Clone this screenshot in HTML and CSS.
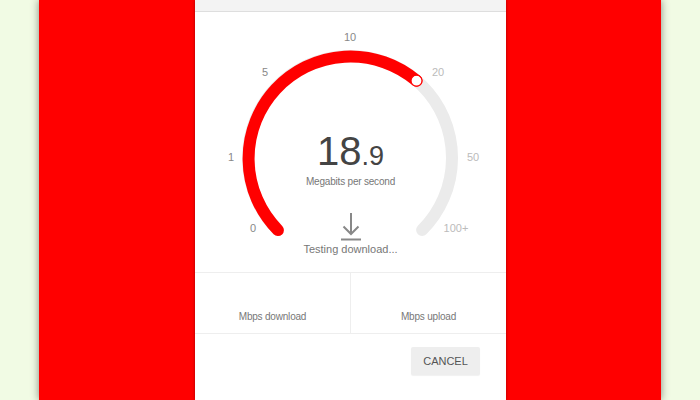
FILE: index.html
```html
<!DOCTYPE html>
<html lang="en">
<head>
    <meta charset="UTF-8">
    <meta name="viewport" content="width=device-width, initial-scale=1.0">
    <title>Speed Test</title>
    <link rel="stylesheet" href="styles.css">
</head>
<body>
    <div class="stage">
        <div class="dialog">
            <div class="dialog-head"></div>

            <div class="gauge">
                <svg class="dial" width="311" height="260" viewBox="0 0 311 260">
                    <path d="M 82.9 218.1 A 102 102 0 1 1 227.1 218.1" fill="none" stroke="#ebebeb" stroke-width="12" stroke-linecap="round"/>
                    <path d="M 82.9 218.1 A 102 102 0 0 1 221.5 68.7" fill="none" stroke="#ff0000" stroke-width="12" stroke-linecap="round"/>
                    <circle cx="221.5" cy="68.7" r="5.5" fill="#fff" stroke="#ff0000" stroke-width="1.2"/>
                    <g class="ticks">
                        <text x="58" y="216" class="passed">0</text>
                        <text x="36" y="145" class="passed">1</text>
                        <text x="70" y="60" class="passed">5</text>
                        <text x="155" y="25" class="passed">10</text>
                        <text x="243" y="60">20</text>
                        <text x="278" y="145">50</text>
                        <text x="261" y="216">100+</text>
                    </g>
                </svg>

                <div class="readout">
                    <div class="value">18<span class="decimal">.9</span></div>
                    <div class="unit">Megabits per second</div>
                </div>

                <div class="status">
                    <svg width="20" height="30" viewBox="0 0 20 30">
                        <path d="M10 2 V23 M2.5 15.5 L10 23 L17.5 15.5 M0 28.5 H20" fill="none" stroke="#888" stroke-width="2"/>
                    </svg>
                    <div class="status-text">Testing download...</div>
                </div>
            </div>

            <div class="stats">
                <div class="stat">
                    <div class="stat-value"></div>
                    <div class="stat-label">Mbps download</div>
                </div>
                <div class="stat">
                    <div class="stat-value"></div>
                    <div class="stat-label">Mbps upload</div>
                </div>
            </div>

            <div class="actions">
                <button class="cancel-btn">CANCEL</button>
            </div>
        </div>
    </div>
</body>
</html>
```

FILE: styles.css
```css
body {
    margin: 0;
    height: 100vh;
    overflow: hidden;
    background-color: #f1fbe4;
    font-family: "Liberation Sans", Arial, sans-serif;
}

.stage {
    width: 622px;
    height: 100%;
    margin-left: 39px;
    background: #ff0000;
    box-shadow: 0 0 8px rgba(0, 0, 0, 0.45);
    display: flex;
    justify-content: center;
}

.dialog {
    width: 311px;
    margin-left: 1px;
    background: white;
    box-shadow: 0 0 3px rgba(0, 0, 0, 0.35);
}

.dialog-head {
    height: 11px;
    background: #f3f3f3;
    border-bottom: 1px solid #dedede;
}

.gauge {
    position: relative;
    height: 260px;
    border-bottom: 1px solid #eeeeee;
}

.dial {
    display: block;
}

.ticks text {
    font-size: 11px;
    fill: #bbbbbb;
    text-anchor: middle;
    dominant-baseline: central;
}

.ticks text.passed {
    fill: #888888;
}

.readout {
    position: absolute;
    top: 119px;
    left: 0;
    right: 0;
    text-align: center;
}

.value {
    font-size: 40px;
    line-height: 40px;
    color: #444444;
}

.decimal {
    font-size: 27px;
}

.unit {
    margin-top: 0;
    font-size: 10px;
    letter-spacing: -0.2px;
    line-height: 12px;
    color: #777777;
}

.status {
    position: absolute;
    top: 199px;
    left: 0;
    right: 0;
    text-align: center;
}

.status svg {
    display: block;
    margin: 0 auto;
}

.status-text {
    margin-top: 1px;
    font-size: 11px;
    line-height: 14px;
    color: #777777;
}

.stats {
    display: flex;
    height: 60px;
    border-bottom: 1px solid #eeeeee;
}

.stat {
    flex: 1;
    display: flex;
    flex-direction: column;
    justify-content: flex-end;
    align-items: center;
    padding-bottom: 10px;
}

.stat + .stat {
    border-left: 1px solid #eeeeee;
}

.stat-label {
    font-size: 10px;
    letter-spacing: -0.2px;
    line-height: 12px;
    color: #777777;
}

.actions {
    display: flex;
    justify-content: flex-end;
    padding: 13px 26px;
}

.cancel-btn {
    width: 69px;
    height: 28px;
    padding: 0;
    border: none;
    border-radius: 2px;
    background: #eeeeee;
    color: #555555;
    font-family: "Liberation Sans", Arial, sans-serif;
    font-size: 11px;
    box-shadow: 0 1px 1px rgba(0, 0, 0, 0.06);
}
```
